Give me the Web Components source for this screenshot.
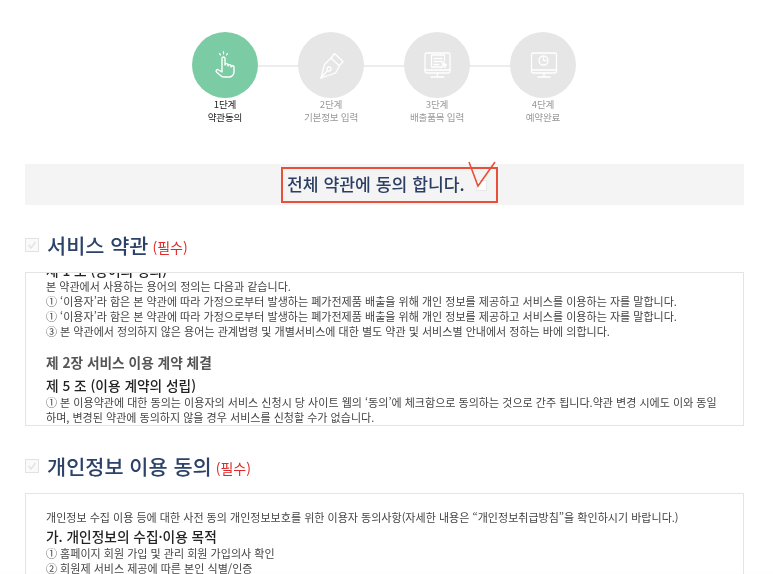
<!DOCTYPE html>
<html lang="ko">
<head>
<meta charset="utf-8">
<style>
  html, body { margin: 0; height: 100%; overflow: hidden; background: #fff; }
  body { font-family: "Noto Sans CJK KR", "Noto Sans", sans-serif; }
</style>
</head>
<body>
<agree-page></agree-page>

<template id="icon-hand">
  <svg viewBox="0 0 40 40" width="40" height="40" fill="none" stroke="#fff" stroke-width="1.4" stroke-linecap="round" stroke-linejoin="round">
    <path d="M17 27V13.500c0-2 3-2 3 0V20c0-1.800 3-1.800 3 0v1c0-1.800 3-1.800 3 0v1c0-1.700 3-1.700 3 0v5c0 3-2.500 5-5 5h-5c-1.500 0-2.700-.6-3.700-1.800L11.500 27c-1.200-1.500.6-3.200 2-2z"/>
    <path d="M14.500 8.500l1 1.500M18.500 6.500V9M22.500 8.500l-1 1.500" stroke-width="1.200"/>
  </svg>
</template>
<template id="icon-pen">
  <svg viewBox="0 0 40 40" width="40" height="40" fill="none" stroke="#fff" stroke-width="1.300" stroke-linecap="round" stroke-linejoin="round">
    <path d="M10 33l3.500-13.500 6.500-6.500 8.500 8-4 7z"/>
    <path d="M20.500 12.500l3-4 8.500 8-3.500 4"/>
    <path d="M10 33l6.500-7.500"/>
    <circle cx="18" cy="24" r="2"/>
  </svg>
</template>
<template id="icon-form">
  <svg viewBox="0 0 40 40" width="40" height="40" fill="none" stroke="#fff" stroke-width="1.300" stroke-linecap="round" stroke-linejoin="round">
    <rect x="8" y="8" width="25" height="20" rx="1.500"/>
    <path d="M8 25h25M20.500 28v4M14 32h13"/>
    <path d="M27.500 16v-6h-13v12h11"/>
    <path d="M17 13.500h8M17 16.500h8M17 19.500h5"/>
    <path d="M25.500 16.500l4.500 3.500-2 .6.800 1.900-1 .4-.8-1.900-1.500 1z" fill="#fff" stroke-width=".6"/>
  </svg>
</template>
<template id="icon-clock">
  <svg viewBox="0 0 40 40" width="40" height="40" fill="none" stroke="#fff" stroke-width="1.300" stroke-linecap="round" stroke-linejoin="round">
    <rect x="8.500" y="8" width="25" height="20" rx="1.500"/>
    <path d="M8.500 25h25M21 28v4M15 32h12"/>
    <circle cx="20.500" cy="15.500" r="4.500"/>
    <path d="M20.500 13v2.500h2.500"/>
  </svg>
</template>

<script>
class StepItem extends HTMLElement {
  constructor() {
    super();
    this.shadow = this.attachShadow({ mode: 'open' });
  }
  connectedCallback() {
    const active = this.hasAttribute('active');
    this.shadow.innerHTML = `
      <style>
        :host { display: flex; flex-direction: column; align-items: center; width: 66px; font-size: 9.6px; line-height: 13px; color: ${active ? '#222' : '#999'}; letter-spacing: -.2px; }
        .circle { width: 66px; height: 66px; border-radius: 50%; background: ${active ? '#7bcba4' : '#e6e6e6'}; display: flex; align-items: center; justify-content: center; }
        .label { text-align: center; white-space: nowrap; }
      </style>
      <div class="circle"></div>
      <div class="label"><div>${this.getAttribute('step')}</div><div>${this.getAttribute('name')}</div></div>
    `;
    const tpl = document.getElementById(this.getAttribute('icon'));
    this.shadow.querySelector('.circle').appendChild(tpl.content.cloneNode(true));
  }
}
customElements.define('step-item', StepItem);

class StepBar extends HTMLElement {
  constructor() {
    super();
    this.attachShadow({ mode: 'open' }).innerHTML = `
      <style>
        :host { display: flex; justify-content: center; }
        .steps { display: flex; gap: 40px; position: relative; margin-right: 1px; }
        .line { position: absolute; left: 33px; right: 33px; top: 33px; height: 2px; background: #ededed; }
        ::slotted(step-item) { position: relative; }
      </style>
      <div class="steps"><div class="line"></div><slot></slot></div>
    `;
  }
}
customElements.define('step-bar', StepBar);

class AllAgree extends HTMLElement {
  constructor() {
    super();
    this.attachShadow({ mode: 'open' }).innerHTML = `
      <style>
        :host { display: flex; justify-content: center; background: #f4f4f4; height: 41px; }
        .box { position: relative; width: 217px; height: 36px; box-sizing: border-box; border: 2px solid #e8503a; display: flex; align-items: center; padding: 0 0 3px 4px; margin-left: 10px; margin-top: 3px; }
        .t { font-size: 17.2px; font-weight: 500; color: #2c3e63; white-space: nowrap; }
        .cb { position: absolute; left: 193px; top: 11px; width: 9px; height: 9px; background: #fff; border: 1px solid #e8e8e8; }
        svg { position: absolute; left: 185px; top: -8px; }
      </style>
      <div class="box">
        <span class="t"><slot></slot></span>
        <span class="cb"></span>
        <svg width="28" height="28" viewBox="0 0 28 28" fill="none" stroke="#e8503a" stroke-width="1.600"><path d="M1 1l9 24L27 1"/></svg>
      </div>
    `;
  }
}
customElements.define('all-agree', AllAgree);

class SectionHead extends HTMLElement {
  constructor() {
    super();
    this.attachShadow({ mode: 'open' }).innerHTML = `
      <style>
        :host { display: flex; align-items: center; height: 30px; }
        .cb { width: 12px; height: 12px; border: 1px solid #e2e2e2; background: #fafafa; display: flex; margin-right: 8px; }
        .t { font-size: 20.8px; font-weight: 500; color: #2c4269; white-space: nowrap; }
        .req { font-size: 14px; color: #e02a2a; margin-left: 4px; margin-top: 4px; }
      </style>
      <span class="cb"><svg width="12" height="12" viewBox="0 0 12 12" fill="none" stroke="#e4e4e4" stroke-width="1.500"><path d="M2.500 6l2.500 3 4.500-6"/></svg></span>
      <span class="t"><slot></slot></span>
      <span class="req">(필수)</span>
    `;
  }
}
customElements.define('section-head', SectionHead);

class TermsBox extends HTMLElement {
  constructor() {
    super();
    this.attachShadow({ mode: 'open' }).innerHTML = `
      <style>
        :host { display: block; border: 1px solid #e4e4e4; overflow: hidden; box-sizing: border-box; padding: 0 20px; color: #444; }
        ::slotted(*) { margin: 0; }
      </style>
      <slot></slot>
    `;
  }
}
customElements.define('terms-box', TermsBox);

class AgreePage extends HTMLElement {
  constructor() {
    super();
    this.attachShadow({ mode: 'open' }).innerHTML = `
      <style>
        :host { display: block; padding: 32px 29px 0 25px; filter: blur(.3px); }
        all-agree { margin-top: 40px; }
        .s1 { margin-top: 25px; }
        .b1 { height: 154px; margin-top: 12px; }
        .s2 { margin-top: 25px; }
        .b2 { height: 90px; margin-top: 12px; }
        .line { white-space: nowrap; font-size: 11.04px; line-height: 15px; }
        h4 { margin: 0; font-weight: 500; font-size: 13.7px; line-height: 18px; color: #222; }
        h3 { margin: 0; font-weight: 700; font-size: 13.7px; line-height: 17px; color: #555; }
        .fade { position: fixed; left: 0; right: 0; bottom: 0; height: 12px; background: linear-gradient(rgba(0,0,0,0), rgba(0,0,0,.025)); }
      </style>
      <step-bar>
        <step-item active icon="icon-hand" step="1단계" name="약관동의"></step-item>
        <step-item icon="icon-pen" step="2단계" name="기본정보 입력"></step-item>
        <step-item icon="icon-form" step="3단계" name="배출품목 입력"></step-item>
        <step-item icon="icon-clock" step="4단계" name="예약완료"></step-item>
      </step-bar>
      <all-agree>전체 약관에 동의 합니다.</all-agree>
      <section-head class="s1">서비스 약관</section-head>
      <terms-box class="b1">
        <h4 style="margin-top:-12px">제 1 조 (용어의 정의)</h4>
        <div class="line">본 약관에서 사용하는 용어의 정의는 다음과 같습니다.</div>
        <div class="line">① ‘이용자’라 함은 본 약관에 따라 가정으로부터 발생하는 폐가전제품 배출을 위해 개인 정보를 제공하고 서비스를 이용하는 자를 말합니다.</div>
        <div class="line">① ‘이용자’라 함은 본 약관에 따라 가정으로부터 발생하는 폐가전제품 배출을 위해 개인 정보를 제공하고 서비스를 이용하는 자를 말합니다.</div>
        <div class="line">③ 본 약관에서 정의하지 않은 용어는 관계법령 및 개별서비스에 대한 별도 약관 및 서비스별 안내에서 정하는 바에 의합니다.</div>
        <h3 style="margin-top:15px">제 2장 서비스 이용 계약 체결</h3>
        <h4 style="margin-top:5px;margin-bottom:1px">제 5 조 (이용 계약의 성립)</h4>
        <div class="line">① 본 이용약관에 대한 동의는 이용자의 서비스 신청시 당 사이트 웹의 ‘동의’에 체크함으로 동의하는 것으로 간주 됩니다.약관 변경 시에도 이와 동일</div>
        <div class="line">하며, 변경된 약관에 동의하지 않을 경우 서비스를 신청할 수가 없습니다.</div>
      </terms-box>
      <section-head class="s2">개인정보 이용 동의</section-head>
      <terms-box class="b2">
        <div class="line" style="margin-top:16px">개인정보 수집 이용 등에 대한 사전 동의 개인정보보호를 위한 이용자 동의사항(자세한 내용은 “개인정보취급방침”을 확인하시기 바랍니다.)</div>
        <h4 style="margin-top:2px;margin-bottom:1px">가. 개인정보의 수집·이용 목적</h4>
        <div class="line">① 홈페이지 회원 가입 및 관리 회원 가입의사 확인</div>
        <div class="line">② 회원제 서비스 제공에 따른 본인 식별/인증</div>
      </terms-box>
      <div class="fade"></div>
    `;
  }
}
customElements.define('agree-page', AgreePage);
</script>
</body>
</html>
